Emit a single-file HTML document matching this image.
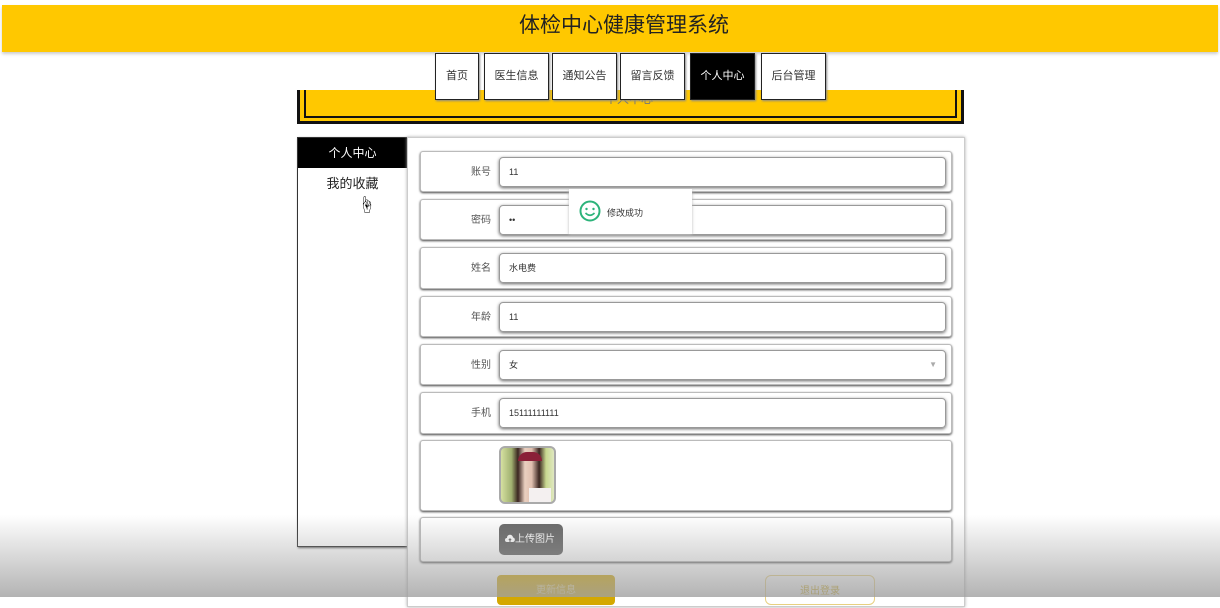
<!DOCTYPE html>
<html><head><meta charset="utf-8"><style>
*{box-sizing:border-box;margin:0;padding:0}
body{width:1220px;height:597px;overflow:hidden;background:#fff;font-family:"Liberation Sans","Noto Sans CJK SC",sans-serif;position:relative}
.hdr{position:absolute;left:2px;top:5px;width:1216px;height:47px;background:#ffc800;text-align:center;font-size:21px;line-height:42px;color:#222;padding-left:28px;box-shadow:0 2px 3px #ccc}
.nav{position:absolute;top:53px;height:47px;border:1px solid #222;background:#fff;font-size:11px;line-height:45px;text-align:center;color:#333;box-shadow:1px 1px 2px #888}
.banner{position:absolute;left:297px;top:90px;width:667px;height:34px;background:#ffc800;border:3px solid #111;border-top:none;overflow:hidden}
.banner i{position:absolute;left:4px;right:4px;bottom:3px;top:-5px;border:2px solid #111;border-top:none}
.banner span{position:absolute;left:305px;top:0px;font-size:12px;color:#777}
.side{position:absolute;left:297px;top:137px;width:111px;height:410px;border:1px solid #333;background:#fff;box-shadow:1px 1px 2px #555}
.side .a{background:#000;color:#fff;height:30px;line-height:30px;text-align:center;font-size:12px}
.side .b{text-align:center;font-size:13px;margin-top:5px;color:#222}
.main{position:absolute;left:407px;top:137px;width:558px;height:470px;background:#fff;border:1px solid #ccc;box-shadow:0 0 3px #aaa}
.row{position:absolute;left:12px;width:532px;border:1px solid #bbb;border-radius:3px;background:#fff;box-shadow:0 1px 2px #444}
.row label{position:absolute;right:460px;top:1px;font-size:10px;color:#555}
.inp{position:absolute;left:78px;width:447px;height:30px;top:5px;border:1px solid #999;border-radius:4px;box-shadow:0 1px 3px #666;font-size:9px;line-height:28px;padding-left:9px;color:#333}
.toast{position:absolute;left:569px;top:189px;width:123px;height:45px;background:#fff;box-shadow:0 1px 3px #bbb;font-size:9px;color:#333}
.fade{position:absolute;left:0;top:515px;width:1220px;height:82px;background:linear-gradient(rgba(255,255,255,0),rgba(160,160,160,.8));pointer-events:none}
</style></head><body>
<div class="hdr">体检中心健康管理系统</div>
<div class="banner"><i></i><span>个人中心</span></div>
<div class="nav" style="left:435px;width:44px">首页</div>
<div class="nav" style="left:484px;width:65px">医生信息</div>
<div class="nav" style="left:552px;width:65px">通知公告</div>
<div class="nav" style="left:620px;width:65px">留言反馈</div>
<div class="nav" style="left:690px;width:65px;background:#000;color:#fff">个人中心</div>
<div class="nav" style="left:761px;width:65px">后台管理</div>
<div class="side"><div class="a">个人中心</div><div class="b">我的收藏</div><div style="position:absolute;left:60px;top:53px;font-size:17px">☝</div></div>
<div class="main">
<div class="row" style="top:13px;height:41px"><label style="line-height:40px">账号</label><div class="inp">11</div></div>
<div class="row" style="top:61px;height:41px"><label style="line-height:40px">密码</label><div class="inp">••</div></div>
<div class="row" style="top:109px;height:42px"><label style="line-height:40px">姓名</label><div class="inp">水电费</div></div>
<div class="row" style="top:158px;height:41px"><label style="line-height:40px">年龄</label><div class="inp">11</div></div>
<div class="row" style="top:206px;height:41px"><label style="line-height:40px">性别</label><div class="inp">女<span style="position:absolute;right:8px;color:#aaa;font-size:8px">▼</span></div></div>
<div class="row" style="top:254px;height:42px"><label style="line-height:40px">手机</label><div class="inp">15111111111</div></div>
<div class="row" style="top:302px;height:71px"><div style="position:absolute;left:78px;top:5px;width:57px;height:58px;border-radius:6px;border:2px solid #aaa;overflow:hidden;background:linear-gradient(90deg,#d5e0a0 0%,#a0b070 20%,#3a2520 32%,#e9cfbf 45%,#e0c0b0 58%,#3a2520 72%,#c8d890 85%,#e0e8c0 100%)"><div style="position:absolute;left:17px;top:4px;width:24px;height:9px;background:#8a2038;border-radius:10px 10px 0 0"></div><div style="position:absolute;left:28px;top:40px;width:22px;height:16px;background:#f4f0f0"></div></div></div>
<div class="row" style="top:379px;height:45px"><div style="position:absolute;left:78px;top:6px;width:64px;height:31px;background:#666;border-radius:5px;color:#fff;font-size:10px;line-height:31px;text-align:left;padding-left:6px"><svg width="10" height="9" viewBox="0 0 10 9" style="vertical-align:-1px"><path d="M2 8 A2 2 0 0 1 2 4 A3 3 0 0 1 8 3.5 A2.3 2.3 0 0 1 8 8 Z" fill="#fff"/><path d="M5 8 V5 M3.8 6 L5 4.8 L6.2 6" stroke="#666" stroke-width="1" fill="none"/></svg>上传图片</div></div>
<div style="position:absolute;left:89px;top:437px;width:118px;height:30px;background:#d4a800;border-radius:4px;color:#f0e0a0;font-size:10px;text-align:center;line-height:32px">更新信息</div>
<div style="position:absolute;left:357px;top:437px;width:110px;height:30px;border:1px solid #e8d080;border-radius:6px;color:#c8a000;font-size:10px;text-align:center;line-height:32px">退出登录</div>
</div>
<div class="toast"><svg style="position:absolute;left:10px;top:11px" width="22" height="22" viewBox="0 0 22 22"><circle cx="11" cy="11" r="9.5" fill="none" stroke="#2db37a" stroke-width="2"/><circle cx="7.5" cy="9" r="1.2" fill="#2db37a"/><circle cx="14.5" cy="9" r="1.2" fill="#2db37a"/><path d="M6.5 13 Q11 17.5 15.5 13" fill="none" stroke="#2db37a" stroke-width="1.6"/></svg><span style="position:absolute;left:38px;top:17px">修改成功</span></div>
<div class="fade"></div>
</body></html>
